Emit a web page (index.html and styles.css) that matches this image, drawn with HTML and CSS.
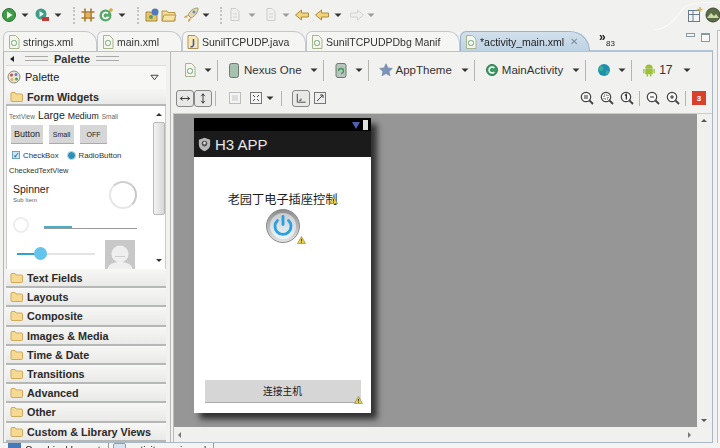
FILE: index.html
```html
<!DOCTYPE html>
<html lang="zh">
<head>
<meta charset="utf-8">
<title>H3 APP - Eclipse</title>
<link rel="stylesheet" href="styles.css">
</head>
<body>
<svg class="defs" width="0" height="0">
  <symbol id="xml" viewBox="0 0 14 16"><path d="M2.500 1.500h6l3.500 3.500v9.500h-9.500z" fill="#f4f6ee" stroke="#a8b48e"/><rect x="4.500" y="6.500" width="5" height="5" rx="2" fill="none" stroke="#6fa77c"/></symbol>
  <symbol id="caret" viewBox="0 0 8 8"><path d="M0.500 2.500h7l-3.500 3.500z" fill="#333"/></symbol>
  <symbol id="folder" viewBox="0 0 14 12"><path d="M1 9.500v-7q0-1 1-1h3l1 1.500h5.500q1 0 1 1v5.500q0 1-1 1H2q-1 0-1-1z" fill="#f6da94" stroke="#cda95c"/></symbol>
  <symbol id="warn" viewBox="0 0 10 9"><path d="M5 .5l4.500 8h-9z" fill="#e8d24c" stroke="#8a7a30" stroke-width=".7"/><path d="M5 3.200v3M5 7v.8" stroke="#333"/></symbol>
  <symbol id="zoom" viewBox="0 0 14 14"><circle cx="6" cy="6" r="4.700" fill="#f8f8f8" stroke="#444" stroke-width="1.200"/><path d="M9.500 9.500l3.500 3.500" stroke="#444" stroke-width="1.800"/></symbol>
  <symbol id="arrowl" viewBox="0 0 16 14"><path d="M1.500 7l6-5v3h7v4h-7v3z" fill="#f3d47a" stroke="#a98c3c"/></symbol>
  <symbol id="page" viewBox="0 0 14 16"><path d="M3 1.500h5l3 3v9h-8z" fill="#f0f0ee" stroke="#b4b8b4"/><path d="M5 7h4M5 10h4" stroke="#c0c4c0"/></symbol>
</svg>
<div class="app">
  <svg class="sweep" viewBox="0 0 80 30"><path d="M14 30c14-1 20-10 28-20 5-6 12-8 38-8" fill="none" stroke="#f9f9f8" stroke-width="1.200"/></svg>
  <header class="toolbar">
    <svg class="ic16" viewBox="0 0 16 16"><circle cx="8" cy="8" r="6.500" fill="#3f9c46" stroke="#2d6e36"/><path d="M6 4.500l5.500 3.500-5.500 3.500z" fill="#f4f8f0"/></svg>
    <svg class="car c1"><use href="#caret"/></svg>
    <svg class="ic16 g1" viewBox="0 0 16 16"><circle cx="7" cy="7" r="5.500" fill="#3f9c86"/><path d="M5.500 4l4.500 3-4.500 3z" fill="#e8f4ee"/><rect x="8" y="10" width="7" height="4" fill="#c23a3a"/></svg>
    <svg class="car c1"><use href="#caret"/></svg>
    <span class="sep s1"></span>
    <svg class="ic16 g2" viewBox="0 0 16 16"><path d="M5 1.500v13M11 1.500v13M1.500 5h13M1.500 11h13" stroke="#a8782c" stroke-width="1.600" fill="none"/><rect x="6" y="6" width="4" height="4" fill="#e8b44c"/></svg>
    <svg class="ic16 g3" viewBox="0 0 16 16"><circle cx="7.500" cy="8.500" r="6" fill="#5aa86a"/><path d="M10 6.500a3 3 0 1 0 0 4h-2" stroke="#fff" stroke-width="1.500" fill="none"/><path d="M13 1v4M11 3h4" stroke="#d8a838" stroke-width="1.300"/></svg>
    <svg class="car c1"><use href="#caret"/></svg>
    <span class="sep s2"></span>
    <svg class="ic16 g4" viewBox="0 0 16 16"><path d="M1 14V5h5l1 1.500h5V14z" fill="#e8c468" stroke="#a8883c"/><circle cx="10" cy="5" r="3.500" fill="#4e7cba"/><circle cx="6" cy="10" r="2" fill="#5aa060"/></svg>
    <svg class="ic16" viewBox="0 0 16 16"><path d="M1 14V4h5l1 1.500h7V14z" fill="#f3dc94" stroke="#b8984c"/><path d="M3 8h12l-2 6H1z" fill="#f6e2a4" stroke="#b8984c"/></svg>
    <svg class="ic16 g4" viewBox="0 0 16 16"><path d="M15 1c-5 0-8 3-10 7l3 3c4-2 7-5 7-10z" fill="#e4d8b0" stroke="#a89868"/><path d="M5 8l-3 1-1 2 3-.5zM8 11l-1 3-2 1 .5-3z" fill="#d8a048"/><circle cx="11" cy="5" r="1.500" fill="#6a8cb8"/></svg>
    <svg class="car c2"><use href="#caret"/></svg>
    <span class="sep s3"></span>
    <svg class="ic16 g7 faint" viewBox="0 0 14 16"><use href="#page"/></svg>
    <svg class="car c3 soft"><use href="#caret"/></svg>
    <svg class="ic16 g8 faint" viewBox="0 0 14 16"><use href="#page"/></svg>
    <svg class="car c2 soft"><use href="#caret"/></svg>
    <svg class="ic16 g9" viewBox="0 0 16 14"><use href="#arrowl"/></svg>
    <svg class="ic16 g9" viewBox="0 0 16 14"><use href="#arrowl"/></svg>
    <svg class="car c1"><use href="#caret"/></svg>
    <svg class="ic16 g10 dim" viewBox="0 0 16 14"><path d="M14.500 7l-6-5v3h-7v4h7v3z" fill="#eee" stroke="#ccc"/></svg>
    <svg class="car c4 soft"><use href="#caret"/></svg>
    <div class="persp">
      <svg class="ic16" viewBox="0 0 16 16"><rect x="1.500" y="3.500" width="11" height="11" fill="#f2f4f6" stroke="#6a7c90"/><path d="M1.500 7.500h11M6 3.500v11" stroke="#6a7c90"/><path d="M13 0v5M10.500 2.500h5" stroke="#e0b440" stroke-width="1.300"/></svg>
      <svg class="ic16" viewBox="0 0 16 16"><circle cx="8" cy="8" r="7" fill="#5c6c44" stroke="#3c4830"/><path d="M2 11l4-5 3 3 2-2 3 4z" fill="#cfd8a8"/></svg>
    </div>
  </header>

  <nav class="tabs">
    <div class="tab tw1"><svg class="tic"><use href="#xml"/></svg>strings.xml</div>
    <div class="tab tw2"><svg class="tic"><use href="#xml"/></svg>main.xml</div>
    <div class="tab tw3"><svg class="tic" viewBox="0 0 14 16"><path d="M2 1.500h7l3 3v10H2z" fill="#f8e8b8" stroke="#b09050"/><path d="M7.500 5v6a2 2 0 0 1-3 1.500" stroke="#4a5ca0" stroke-width="1.600" fill="none"/></svg>SunilTCPUDP.java</div>
    <div class="tab tw4"><svg class="tic"><use href="#xml"/></svg>SunilTCPUDPDbg Manif</div>
    <div class="tab active tw5"><svg class="tic"><use href="#xml"/></svg>*activity_main.xml<span class="close">✕</span></div>
    <div class="more"><span class="chev">»</span><span class="cnt">83</span></div>
    <div class="winbtns"><span class="min"></span><span class="max"></span></div>
  </nav>

  <main class="editor">
    <aside class="palette">
      <div class="pal-head"><span class="tri"></span><span class="grip"></span><b>Palette</b><span class="grip short"></span></div>
      <div class="pal-select">
        <svg class="ic14" viewBox="0 0 14 14"><circle cx="7" cy="7" r="6" fill="#e8e4dc" stroke="#8a8a80"/><circle cx="4.500" cy="5" r="1.500" fill="#d04a3c"/><circle cx="9" cy="4.500" r="1.500" fill="#4c8ac4"/><circle cx="9.500" cy="9" r="1.500" fill="#58a050"/><circle cx="5" cy="9.500" r="1.500" fill="#e0b840"/></svg>
        <span>Palette</span>
        <svg class="pal-down" viewBox="0 0 10 7"><path d="M1 1h8L5 6z" fill="#f4f4f4" stroke="#333"/></svg>
      </div>
      <div class="drawer open"><svg class="fold" viewBox="0 0 14 12"><use href="#folder"/></svg>Form Widgets</div>
      <section class="widgets">
        <div class="preview">
          <div class="row-text"><span class="t-s">TextView</span><span class="t-l">Large</span><span class="t-m">Medium</span><span class="t-s">Small</span></div>
          <div class="row-btn"><span class="w-btn b1">Button</span><span class="w-btn b2">Small</span><span class="w-btn b3">OFF</span></div>
          <div class="row-check">
            <span class="cbox">✓</span><span>CheckBox</span><span class="radio"></span><span>RadioButton</span>
          </div>
          <div class="row-ctv">CheckedTextView</div>
          <div class="row-spin">
            <div class="spin-text"><div class="sp-t">Spinner</div><div class="sp-s">Sub Item</div></div>
            <span class="ring big"></span>
          </div>
          <div class="row-prog"><span class="ring small"></span><span class="bar"><i></i></span></div>
          <div class="row-seek">
            <span class="seek"><i></i><b></b></span>
            <svg class="avatar" viewBox="0 0 30 30"><rect width="30" height="30" fill="#c8c8c8"/><circle cx="15" cy="14" r="8.500" fill="#efefef"/><rect x="10" y="16" width="10" height="1" fill="#ccc"/><path d="M2 30c1-6 7-8 13-8s12 2 13 8z" fill="#efefef"/></svg>
          </div>
        </div>
        <div class="vscroll"><span class="up"></span><span class="thumb"></span><span class="down"></span></div>
      </section>
      <div class="drawer"><svg class="fold" viewBox="0 0 14 12"><use href="#folder"/></svg>Text Fields</div>
      <div class="drawer"><svg class="fold" viewBox="0 0 14 12"><use href="#folder"/></svg>Layouts</div>
      <div class="drawer"><svg class="fold" viewBox="0 0 14 12"><use href="#folder"/></svg>Composite</div>
      <div class="drawer"><svg class="fold" viewBox="0 0 14 12"><use href="#folder"/></svg>Images &amp; Media</div>
      <div class="drawer"><svg class="fold" viewBox="0 0 14 12"><use href="#folder"/></svg>Time &amp; Date</div>
      <div class="drawer"><svg class="fold" viewBox="0 0 14 12"><use href="#folder"/></svg>Transitions</div>
      <div class="drawer"><svg class="fold" viewBox="0 0 14 12"><use href="#folder"/></svg>Advanced</div>
      <div class="drawer"><svg class="fold" viewBox="0 0 14 12"><use href="#folder"/></svg>Other</div>
      <div class="drawer"><svg class="fold" viewBox="0 0 14 12"><use href="#folder"/></svg>Custom &amp; Library Views</div>
    </aside>

    <section class="design">
      <div class="config">
        <svg class="tic"><use href="#xml"/></svg>
        <svg class="car cc cc-a"><use href="#caret"/></svg>
        <span class="vsep"></span>
        <svg class="phone" viewBox="0 0 10 15"><rect x=".5" y=".5" width="9" height="14" rx="2" fill="#a8c0b0" stroke="#6a7a70"/></svg>
        <span class="lbl">Nexus One</span>
        <svg class="car cc"><use href="#caret"/></svg>
        <span class="vsep"></span>
        <svg class="phone rot" viewBox="0 0 12 15"><rect x="1" y=".5" width="10" height="14" rx="2" fill="#b8c4bc" stroke="#6a7a70"/><path d="M3.500 8a2.500 2.500 0 1 1 2.500 2.500" stroke="#3a9a5a" fill="none" stroke-width="1.300"/></svg>
        <svg class="car cc cc-b"><use href="#caret"/></svg>
        <span class="vsep"></span>
        <svg class="ic14 cfg" viewBox="0 0 14 14"><path d="M7 .8l1.900 4.100 4.500.5-3.400 3 1 4.400L7 10.500l-4 2.300 1-4.400-3.400-3 4.500-.5z" fill="#7c94b8" stroke="#5c7498" stroke-width=".5"/></svg>
        <span class="lbl tight">AppTheme</span>
        <svg class="car cc cc-c"><use href="#caret"/></svg>
        <span class="vsep"></span>
        <svg class="ic14 cfg" viewBox="0 0 14 14"><circle cx="7" cy="7" r="5.500" fill="#3c9a64" stroke="#2c7a4c"/><path d="M9.300 5a3 3 0 1 0 0 4" stroke="#fff" stroke-width="1.500" fill="none"/></svg>
        <span class="lbl tight">MainActivity</span>
        <svg class="car cc cc-c"><use href="#caret"/></svg>
        <span class="vsep"></span>
        <svg class="ic14 globe" viewBox="0 0 14 14"><circle cx="7" cy="7" r="6" fill="#1f8fb0"/><path d="M3 3c3 0 4 2 3 4s-3 1-4 0zM9 8c2-1 3 0 3 1l-2 3c-1-1-2-2-1-4z" fill="#37b09a"/></svg>
        <svg class="car cc cc-d"><use href="#caret"/></svg>
        <span class="vsep"></span>
        <svg class="ic14 cfg" viewBox="0 0 14 15"><path d="M3 5.500a4 4 0 0 1 8 0zM3 6h8v6H3zM.8 6.500h1.400v4.500H.8zM11.800 6.500h1.400v4.500h-1.400zM4.500 12h1.500v2.500H4.500zM8 12h1.500v2.500H8z" fill="#9cc03c"/></svg>
        <span class="lbl api">17</span>
        <svg class="car cc"><use href="#caret"/></svg>
      </div>
      <div class="tools">
        <span class="tbtn"><svg viewBox="0 0 14 14"><path d="M2 7h10M2 7l2.500-2M2 7l2.500 2M12 7L9.500 5M12 7L9.500 9" stroke="#333" fill="none"/></svg></span>
        <span class="tbtn"><svg viewBox="0 0 14 14"><path d="M7 2v10M7 2L5 4.500M7 2l2 2.500M7 12l-2-2.500M7 12l2-2.500" stroke="#333" fill="none"/></svg></span>
        <span class="vsep short first"></span>
        <span class="tb"><svg viewBox="0 0 14 14"><rect x="1.500" y="1.500" width="11" height="11" fill="#f4f4f4" stroke="#888" stroke-dasharray="1 1"/><rect x="4" y="4" width="6" height="6" fill="#ddd"/></svg></span>
        <span class="tb t-b"><svg viewBox="0 0 14 14"><rect x="1.500" y="1.500" width="11" height="11" fill="#f4f4f4" stroke="#777"/><path d="M4 4l2 2M10 4L8 6M4 10l2-2M10 10L8 8" stroke="#444"/></svg></span>
        <svg class="car"><use href="#caret"/></svg>
        <span class="vsep short"></span>
        <span class="tbtn"><svg viewBox="0 0 14 14"><path d="M3 2v9h9" stroke="#444" fill="none"/><path d="M5 9h2V7" stroke="#444" fill="none"/></svg></span>
        <span class="tb t-c"><svg viewBox="0 0 14 14"><rect x="1.500" y="1.500" width="11" height="11" fill="#eee" stroke="#777"/><path d="M4 10l6-6M7 4h3v3" stroke="#444" fill="none"/></svg></span>
        <div class="zooms">
          <svg class="zm" viewBox="0 0 14 14"><use href="#zoom"/><path d="M4 5h4M4 7h4" stroke="#333"/></svg>
          <svg class="zm" viewBox="0 0 14 14"><use href="#zoom"/><path d="M4 4h4v4H4z" stroke="#555" fill="none" stroke-dasharray="1 1"/></svg>
          <svg class="zm" viewBox="0 0 14 14"><use href="#zoom"/><path d="M5 4.500L6.300 3.500V8.500" stroke="#222" fill="none" stroke-width="1.200"/></svg>
          <span class="vsep short z"></span>
          <svg class="zm" viewBox="0 0 14 14"><use href="#zoom"/><path d="M4 6h4" stroke="#333"/></svg>
          <svg class="zm" viewBox="0 0 14 14"><use href="#zoom"/><path d="M4 6h4M6 4v4" stroke="#333"/></svg>
          <span class="vsep short z"></span>
          <span class="errs">3</span>
        </div>
      </div>
      <div class="canvas-wrap">
        <div class="canvas">
          <div class="device">
            <div class="statusbar">
              <svg class="wifi" viewBox="0 0 8 8"><path d="M0 1h8L4 8z" fill="#5060b0"/></svg>
              <span class="batt"></span>
            </div>
            <div class="actionbar">
              <svg class="applogo" viewBox="0 0 16 16"><path d="M8 .8l6 2.200v5c0 4-3 6-6 7.200-3-1.200-6-3.200-6-7.200V3z" fill="#b8b8b8"/><circle cx="8" cy="7" r="3" fill="#555"/><circle cx="8" cy="6.500" r="1.400" fill="#ddd"/></svg>
              <span>H3 APP</span>
            </div>
            <div class="content">
              <div class="title">老园丁电子插座控制<svg class="wt"><use href="#warn"/></svg></div>
              <div class="power">
                <svg viewBox="0 0 34 34"><defs><linearGradient id="rim" x1="0" y1="0" x2="0" y2="1"><stop offset="0" stop-color="#8c8c8c"/><stop offset="1" stop-color="#e4e4e4"/></linearGradient><linearGradient id="face" x1="0" y1="0" x2="0" y2="1"><stop offset="0" stop-color="#c8ccd0"/><stop offset="1" stop-color="#eef6fa"/></linearGradient></defs><circle cx="17" cy="17" r="16.500" fill="url(#rim)" stroke="#8a8a8a"/><circle cx="17" cy="17" r="13" fill="url(#face)"/><path d="M11.500 11.500a8 8 0 1 0 11 0" fill="none" stroke="#2aa0e0" stroke-width="2.800" stroke-linecap="round"/><path d="M17 7.500v8" stroke="#2aa0e0" stroke-width="2.800" stroke-linecap="round"/></svg>
                <svg class="wp"><use href="#warn"/></svg>
              </div>
              <div class="connect">连接主机<svg class="wc"><use href="#warn"/></svg></div>
            </div>
          </div>
        </div>
        <div class="sb-v"><span class="sb-up"></span><span class="sb-down"></span></div>
        <div class="sb-h"><span class="al"></span><span class="ar"></span></div>
      </div>
    </section>
  </main>
  <footer class="bottom">
    <div class="btab"><span class="bi blue"></span><span class="btxt">Graphical Layout</span></div>
    <div class="btab second"><span class="bi pale"></span><span class="btxt">activity_main.xml</span></div>
  </footer>
</div>
</body>
</html>
```
FILE: styles.css
```css
* { box-sizing: border-box; }
html, body { margin: 0; padding: 0; }
body { width: 720px; height: 448px; overflow: hidden; background: #f1f1ef; font-family: "Liberation Sans", Arial, sans-serif; color: #222; filter: blur(0.35px); }
.defs { position: absolute; }
.app { width: 720px; height: 448px; display: flex; flex-direction: column; overflow: hidden; position: relative; }
.app::after { content: ""; position: absolute; right: 0; top: 30px; bottom: 5px; width: 2px; border-left: 1px solid #b8c0c8; border-top: 1px solid #b8c0c8; background: #f6f6f6; }
svg { flex: none; display: block; }
.sweep { position: absolute; right: 0; top: 0; width: 80px; height: 30px; }

/* main toolbar */
.toolbar { height: 30px; flex: none; display: flex; align-items: center; padding: 0 0 0 1px; position: relative; }
.ic16 { width: 16px; height: 16px; }
.ic14 { width: 14px; height: 14px; }
.car { width: 8px; height: 8px; }
.c1 { margin-left: 4px; }
.c2 { margin-left: 3px; }
.c3 { margin-left: 5px; }
.c4 { margin-left: 2px; }
.soft { opacity: .45; }
.g1 { margin-left: 5px; }
.g2 { margin-left: 5px; }
.g3 { margin-left: 2px; }
.g4 { margin-left: 6px; }
.g7 { margin-left: 5px; }
.g8 { margin-left: 7px; }
.g9 { margin-left: 4px; }
.g10 { margin-left: 7px; }
.faint { opacity: .6; }
.dim { opacity: .8; }
.sep { width: 2px; height: 17px; margin-left: 10px; border-left: 2px dotted #c4c4be; }
.s1 { margin-left: 11px; }
.s2 { margin-left: 11px; }
.persp { margin-left: auto; margin-right: -1px; display: flex; gap: 2px; }

/* editor tabs */
.tabs { height: 21px; flex: none; display: flex; align-items: flex-end; padding-left: 3px; position: relative; }
.tab { height: 20px; flex: none; display: flex; align-items: center; gap: 2px; padding-left: 3px; font-size: 10.500px; color: #333; background: #f5f5f3; border: 1px solid #c4c8cc; border-bottom: 0; border-radius: 6px 12px 0 0; white-space: nowrap; }
.tic { width: 14px; height: 16px; }
.tw1 { width: 94px; }
.tw2 { width: 85px; }
.tw3 { width: 124px; }
.tw4 { width: 154px; }
.tw5 { width: 130px; }
.tab.active { background: linear-gradient(#d2e0ec, #bdd2e4); border-color: #9cb4c8; border-radius: 7px 22px 0 0; color: #222; }
.close { font-size: 10px; color: #7a8a96; margin-left: 4px; }
.more { margin-left: 10px; align-self: center; position: relative; width: 22px; height: 20px; color: #222; }
.chev { position: absolute; left: -1px; top: -1px; font-size: 12px; font-weight: 700; }
.cnt { position: absolute; left: 6px; top: 8px; font-size: 8px; }
.winbtns { margin-left: auto; margin-right: 10px; display: flex; align-items: flex-start; gap: 6px; align-self: flex-start; margin-top: 3px; }
.min { width: 9px; height: 4px; border: 1px solid #8a98a4; background: #f4f4f4; }
.max { width: 9px; height: 9px; border: 1px solid #8a98a4; border-top-width: 2px; background: #f8f8f8; }

/* editor frame */
.editor { height: 393px; flex: none; display: flex; margin: -1px 7px 0 3px; border: 1px solid #a9b8c4; border-top: 2px solid #b0c4d6; background: #f1f1ef; }
.palette { width: 167px; flex: none; display: flex; flex-direction: column; border-right: 1px solid #b8b8b4; padding: 0 4px 0 2px; }
.pal-head { height: 13px; flex: none; display: flex; align-items: center; font-size: 11px; color: #333; padding-left: 4px; }
.pal-head b { margin: 0 6px; font-weight: 700; }
.tri { width: 0; height: 0; border: 3px solid transparent; border-right: 4px solid #222; border-left: 0; }
.grip { width: 23px; height: 5px; margin-left: 11px; border-top: 1px solid #aaa; border-bottom: 1px solid #aaa; }
.grip.short { margin-left: 0; }
.pal-select { height: 23px; flex: none; display: flex; align-items: center; gap: 4px; font-size: 11px; padding: 0 6px 0 1px; background: #f7f7f5; border-top: 1px solid #ddd; }
.pal-down { width: 9px; height: 7px; margin-left: auto; margin-right: 1px; }
.drawer { height: 19.200px; flex: none; display: flex; align-items: center; gap: 3px; padding-left: 4px; font-size: 10.800px; font-weight: 700; color: #2a2a2a; background: linear-gradient(#f6f6f4, #e9e9e7); border-bottom: 2px solid #b6b8b8; border-top: 1px solid #f8f8f8; }
.drawer.open { height: 18px; }
.fold { width: 14px; height: 12px; }

/* widgets preview */
.widgets { height: 163px; flex: none; display: flex; background: #fff; border-left: 1px solid #ccc; }
.preview { width: 146px; flex: none; padding: 3px 0 0 2px; color: #333; }
.row-text { display: flex; align-items: baseline; gap: 3px; height: 13px; }
.t-s { font-size: 6.500px; color: #666; }
.t-l { font-size: 10.500px; color: #222; line-height: 13px; }
.t-m { font-size: 8.700px; color: #222; }
.row-btn { display: flex; gap: 6px; margin: 3px 0 0 2px; }
.w-btn { height: 19px; background: #d6d6d6; display: flex; align-items: center; justify-content: center; border-bottom: 1px solid #aaa; color: #222; }
.b1 { width: 32px; font-size: 9px; }
.b2 { width: 25px; font-size: 7px; }
.b3 { width: 27px; font-size: 7px; }
.row-check { display: flex; align-items: center; gap: 3px; margin: 4px 0 0 3px; font-size: 7.800px; height: 14px; }
.cbox { width: 8px; height: 8px; background: #cfe6f2; border: 1px solid #6ca4c4; color: #1f7ea8; font-size: 8px; line-height: 7px; font-weight: 700; }
.radio { width: 9px; height: 9px; margin-left: 5px; border-radius: 50%; background: #2a90b8; border: 1.500px solid #b8dcec; }
.row-ctv { font-size: 7.500px; margin-top: 2px; height: 13px; line-height: 13px; }
.row-spin { display: flex; height: 40px; padding: 6px 0 0 4px; justify-content: space-between; }
.sp-t { font-size: 10.500px; line-height: 13px; color: #222; }
.sp-s { font-size: 6px; color: #666; line-height: 8px; }
.ring { display: block; flex: none; border-radius: 50%; border: 2px solid #e6e6e6; border-top-color: #d0d0d0; border-right-color: #c8c8c8; }
.ring.big { width: 28px; height: 28px; margin: -2px 16px 0 0; }
.ring.small { width: 16px; height: 16px; margin-left: 4px; border-color: #eee; }
.row-prog { display: flex; align-items: center; gap: 15px; height: 18px; margin-top: -1px; }
.bar { width: 93px; height: 3px; position: relative; border-bottom: 1px solid #999; margin-top: 4px; }
.bar i { position: absolute; left: 0; top: 0; width: 28px; height: 2px; background: #45b0c8; }
.row-seek { display: flex; height: 29px; padding-left: 8px; margin-top: 6px; }
.seek { width: 78px; height: 2px; position: relative; background: #e4e4e4; margin-top: 13px; }
.seek i { position: absolute; left: 0; top: 0; width: 22px; height: 2px; background: #35a0c8; }
.seek b { position: absolute; left: 17px; top: -6px; width: 13px; height: 13px; border-radius: 50%; background: #63c4ec; }
.avatar { width: 30px; height: 30px; margin-left: 10px; }
.vscroll { flex: 1; display: flex; flex-direction: column; align-items: center; border-right: 1px solid #ccc; }
.up { width: 0; height: 0; margin-top: 7px; border: 3px solid transparent; border-bottom: 3px solid #333; border-top: 0; }
.thumb { width: 12px; height: 93px; margin-top: 6px; flex: none; background: linear-gradient(90deg, #f2f2f2, #d8d8d8); border: 1px solid #b8b8b8; border-radius: 2px; }
.down { width: 0; height: 0; margin-top: 44px; border: 3px solid transparent; border-top: 3px solid #333; border-bottom: 0; }

/* design side */
.design { flex: 1; min-width: 0; display: flex; flex-direction: column; }
.config { height: 33px; flex: none; display: flex; align-items: center; padding: 3px 0 0 12px; font-size: 11.500px; color: #333; }
.cc { margin-left: 6px; }
.cc-a { margin-left: 7px; }
.cc-b { margin-left: 8px; }
.cc-c { margin-left: 9px; }
.cc-d { margin-left: 7px; }
.vsep { width: 1px; height: 21px; margin: 0 5px; background: #b4b4b0; }
.vsep.short { height: 15px; margin: 0 10px 0 7px; }
.vsep.short.first { margin: 0 12px 0 3px; }
.phone { width: 10px; height: 15px; margin-left: 6px; }
.phone.rot { width: 12px; height: 15px; }
.cfg { margin-left: 5px; }
.lbl { margin-left: 5px; margin-right: 2px; white-space: nowrap; }
.lbl.tight { margin-left: 3px; margin-right: 0; }
.globe { margin-left: 6px; }
.lbl.api { margin-left: 3px; margin-right: 4px; font-size: 12px; }
.tools { height: 28px; flex: none; display: flex; align-items: center; padding: 0 6px 2px 5px; }
.tbtn { width: 18px; height: 17px; padding: 1px; border: 1px solid #888; border-radius: 3px; background: #e8e8e6; }
.tb { width: 14px; height: 14px; margin-right: 7px; }
.t-b { margin-right: 3px; }
.t-c { margin-left: 3px; margin-right: 0; }
.zooms { margin-left: auto; display: flex; align-items: center; gap: 6px; }
.zm { width: 14px; height: 14px; }
.vsep.short.z { margin: 0 0 0 -1px; height: 15px; }
.errs { width: 14px; height: 14px; background: #d8402e; color: #fff; font-size: 8px; font-weight: 700; display: flex; align-items: center; justify-content: center; }
.tb svg, .tbtn svg { width: 100%; height: 100%; }

.canvas-wrap { flex: 1; min-height: 0; display: grid; grid-template-columns: 1fr 15px; grid-template-rows: 1fr 15px; margin-left: 2px; border-left: 1px solid #bbb; border-top: 1px solid #ccc; }
.canvas { background: #969696; padding: 4px 0 0 20px; overflow: hidden; }
.device { width: 177px; height: 295px; display: flex; flex-direction: column; background: #fff; box-shadow: 6px 6px 6px rgba(30,30,30,.85); }
.statusbar { height: 13px; flex: none; background: #000; display: flex; align-items: center; justify-content: flex-end; gap: 3px; padding-right: 3px; }
.wifi { width: 8px; height: 8px; }
.batt { width: 5px; height: 10px; background: #e0e0e0; }
.actionbar { height: 26px; flex: none; background: #1b1b1b; display: flex; align-items: center; gap: 3px; padding-left: 3px; color: #e8e8e8; font-size: 15px; }
.applogo { width: 15px; height: 15px; }
.content { flex: 1; display: flex; flex-direction: column; align-items: center; padding-top: 32px; }
.title { font-family: "Noto Sans CJK SC", sans-serif; font-size: 12.200px; line-height: 18px; color: #1c1c1c; position: relative; margin-top: 1px; }
.wt { position: absolute; right: -1px; top: 6px; width: 9px; height: 8px; }
.power { width: 34px; height: 34px; margin-top: 1px; position: relative; }
.power > svg:first-child { width: 34px; height: 34px; }
.wp { position: absolute; right: -6px; bottom: -1px; width: 9px; height: 8px; }
.connect { width: 156px; height: 23px; margin-top: auto; margin-bottom: 10px; background: #d6d6d6; border-bottom: 1px solid #aaa; display: flex; align-items: center; justify-content: center; font-family: "Noto Sans CJK SC", sans-serif; font-size: 9.800px; color: #222; position: relative; }
.wc { position: absolute; right: -2px; bottom: -2px; width: 9px; height: 8px; }
.sb-v { background: #f0f0ee; position: relative; }
.sb-up { position: absolute; top: 5px; left: 4px; border: 3px solid transparent; border-bottom: 3px solid #555; border-top: 0; }
.sb-down { position: absolute; bottom: 5px; left: 4px; border: 3px solid transparent; border-top: 3px solid #555; border-bottom: 0; }
.sb-h { display: flex; align-items: center; justify-content: space-between; padding: 0 6px 0 4px; background: #f0f0ee; }
.al { border: 3px solid transparent; border-right: 3px solid #777; border-left: 0; }
.ar { border: 3px solid transparent; border-left: 3px solid #777; border-right: 0; }

/* bottom tabs */
.bottom { flex: 1; display: flex; padding-left: 4px; background: #f4f4f2; font-size: 10px; overflow: hidden; }
.btab { width: 105px; height: 14px; display: flex; gap: 4px; padding: 0 0 0 4px; border-right: 1px solid #999; white-space: nowrap; }
.btab.second { width: 105px; }
.btxt { line-height: 14px; margin-top: 1px; }
.bi { width: 13px; height: 11px; }
.blue { background: #4878b8; }
.pale { background: #d8e4f0; border: 1px solid #8aa0b8; border-radius: 2px; }
```
